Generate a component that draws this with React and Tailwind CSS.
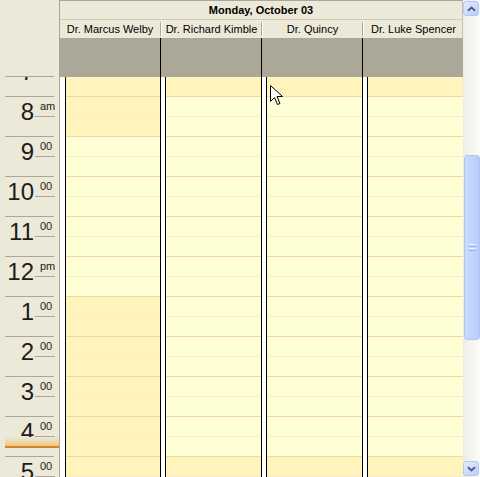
import React from "react";

const HOURS = [
  { h: "8", s: "am" },
  { h: "9", s: "00" },
  { h: "10", s: "00" },
  { h: "11", s: "00" },
  { h: "12", s: "pm" },
  { h: "1", s: "00" },
  { h: "2", s: "00" },
  { h: "3", s: "00" },
  { h: "4", s: "00", now: true },
  { h: "5", s: "00" },
];

const SLOTS = [];
for (let t = 7 * 60 + 30; t <= 17 * 60 + 30; t += 30) SLOTS.push(t);

const DOCTORS = [
  { name: "Dr. Marcus Welby", start: 9 * 60, end: 13 * 60 },
  { name: "Dr. Richard Kimble", start: 8 * 60, end: 17 * 60 },
  { name: "Dr. Quincy", start: 8 * 60, end: 17 * 60 },
  { name: "Dr. Luke Spencer", start: 8 * 60, end: 17 * 60 },
];

function HourBlock({ h, s, now }) {
  return (
    <div className="relative h-[40px]">
      <div className="flex h-[20px]">
        <div className="w-[35px] pr-[1px] text-right text-[24px] leading-[24px] mt-[3px] h-[24px] text-[#1c1c1c] shrink-0">
          {h}
        </div>
        <div className="w-[20px] h-[20px] border-b border-[#aca899] pl-[5px] pt-[4px] text-[11px] leading-[11px] text-[#1c1c1c] shrink-0">
          {s}
        </div>
      </div>
      <div className="h-[20px] mx-[5px] border-b border-[#aca899]" />
      {now && (
        <div className="absolute left-[5px] right-0 top-[20px] flex flex-col">
          <div className="h-[9px] bg-gradient-to-b from-[#ece9d8] to-[#efc77e]" />
          <div className="h-[2px] bg-[#d2862a]" />
        </div>
      )}
    </div>
  );
}

function TimeColumn() {
  return (
    <div className="w-[60px] h-full shrink-0 flex flex-col bg-[#ece9d8] border-r border-[#aca899]">
      <div className="h-[77px] shrink-0 px-[5px]">
        <div className="h-full border-b border-[#aca899]" />
      </div>
      <div className="flex-1 overflow-hidden">
        <div className="-mt-[20px]">
          <HourBlock h="7" s="00" />
        </div>
        {HOURS.map((x) => (
          <HourBlock key={x.h} h={x.h} s={x.s} now={x.now} />
        ))}
      </div>
    </div>
  );
}

function DayColumn({ first, start, end }) {
  return (
    <div
      className={
        first
          ? "flex h-full w-[100px] shrink-0"
          : "flex h-full w-[101px] shrink-0 border-l border-black"
      }
    >
      <div
        className={
          first
            ? "w-[6px] h-full bg-white border-r border-black shrink-0"
            : "w-[5px] h-full bg-white border-r border-black shrink-0"
        }
      />
      <div className="flex-1 flex flex-col">
        {SLOTS.map((t) => {
          const work = t >= start && t < end;
          const hourLine = t % 60 === 30;
          return (
            <div
              key={t}
              className={
                "h-[20px] shrink-0 border-b " +
                (work ? "bg-[#ffffd5] " : "bg-[#fff4bc] ") +
                (hourLine ? "border-[#f5d7a2]" : "border-[#fcebc5]")
              }
            />
          );
        })}
      </div>
    </div>
  );
}

function Chevron({ down }) {
  return (
    <svg width="9" height="6" viewBox="0 0 9 6">
      <path
        d={down ? "M1 1.2 L4.5 4.5 L8 1.2" : "M1 4.8 L4.5 1.5 L8 4.8"}
        fill="none"
        stroke="#4d6185"
        strokeWidth="2"
      />
    </svg>
  );
}

function ScrollButton({ down }) {
  return (
    <div className="h-[17px] w-[17px] shrink-0 p-[1px] pl-0">
      <div className="h-full w-full rounded-[3px] border border-[#b4c8f6] bg-gradient-to-br from-[#e3ebfe] to-[#bccdf9] flex items-center justify-center">
        <Chevron down={down} />
      </div>
    </div>
  );
}

function Scrollbar() {
  return (
    <div className="w-[17px] h-full shrink-0 flex flex-col bg-gradient-to-r from-[#eeede5] to-[#fcfcfa]">
      <ScrollButton />
      <div className="h-[138px] shrink-0" />
      <div className="h-[185px] shrink-0 ml-[1px] rounded-[3px] border border-[#b1c5f5] bg-gradient-to-r from-[#cddbfe] to-[#b9cdfb] flex items-center justify-center">
        <div className="flex flex-col gap-[1px] w-[7px]">
          <div className="h-[1px] bg-[#eef3ff]" />
          <div className="h-[1px] bg-[#8cadf3]" />
          <div className="h-[1px] bg-[#eef3ff]" />
          <div className="h-[1px] bg-[#8cadf3]" />
        </div>
      </div>
      <div className="flex-1" />
      <ScrollButton down />
    </div>
  );
}

export default function App() {
  return (
    <div className="relative flex w-[480px] h-[477px] overflow-hidden bg-[#ece9d8] font-['Liberation_Sans',Arial,sans-serif]">
      <TimeColumn />
      <div className="flex flex-col w-[403px] h-full shrink-0">
        <div className="h-[20px] shrink-0 border-t border-b border-r border-t-[#aca899] border-b-[#d0ccbc] border-r-[#c5c2b2] bg-[#ece9d8] flex items-center justify-center text-[11px] font-bold text-black">
          Monday, October 03
        </div>
        <div className="h-[18px] shrink-0 flex bg-[#ece9d8] border-r border-[#c5c2b2]">
          {DOCTORS.map((d, i) => (
            <div
              key={d.name}
              className={
                i === 0
                  ? "w-[100px] shrink-0 flex items-center"
                  : "w-[101px] shrink-0 flex items-center"
              }
            >
              {i > 0 && (
                <div className="w-[2px] h-[14px] border-l border-r border-l-[#aca899] border-r-white shrink-0" />
              )}
              <div className="flex-1 text-center text-[11px] text-black whitespace-nowrap">
                {d.name}
              </div>
            </div>
          ))}
        </div>
        <div className="h-[39px] shrink-0 flex bg-[#aca899]">
          {DOCTORS.map((d, i) => (
            <div
              key={d.name}
              className={
                i === 0
                  ? "w-[100px] shrink-0 h-full"
                  : "w-[101px] shrink-0 h-full border-l border-black"
              }
            />
          ))}
        </div>
        <div className="flex-1 flex overflow-hidden">
          {DOCTORS.map((d, i) => (
            <DayColumn key={d.name} first={i === 0} start={d.start} end={d.end} />
          ))}
        </div>
      </div>
      <Scrollbar />
      <svg
        className="absolute left-[270px] top-[85px]"
        width="13"
        height="21"
        viewBox="0 0 13 21"
      >
        <path
          d="M0.5 0.5 L0.5 16.5 L4.5 12.5 L7.5 19.5 L10 18.5 L7 11.5 L12.5 11.5 Z"
          fill="white"
          stroke="black"
          strokeWidth="1"
        />
      </svg>
    </div>
  );
}
